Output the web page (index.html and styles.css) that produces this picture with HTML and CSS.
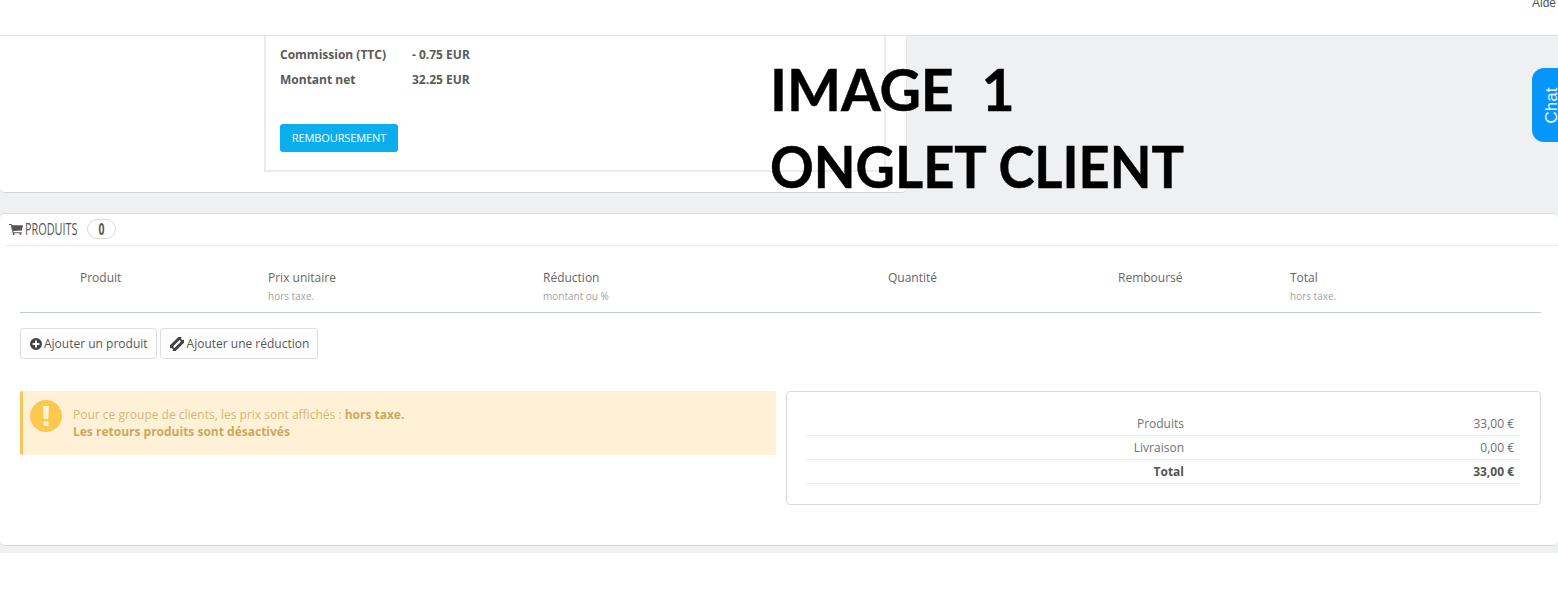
FILE: index.html
```html
<!DOCTYPE html>
<html lang="fr">
<head>
<meta charset="utf-8">
<title>Commande</title>
<link rel="stylesheet" href="styles.css">
</head>
<body>
<header class="topbar"><span class="help">Aide</span></header>
<main class="content">
  <section class="refund-panel">
    <div class="refund-box">
      <dl class="refund-row"><dt>Commission (TTC)</dt><dd>- 0.75 EUR</dd></dl>
      <dl class="refund-row"><dt>Montant net</dt><dd>32.25 EUR</dd></dl>
      <button class="btn-refund">REMBOURSEMENT</button>
    </div>
  </section>
  <section class="products-panel">
    <h2 class="panel-heading">
      <svg class="icon-cart" viewBox="0 0 14 11"><path d="M0 0h2.600l.4 1.200H14l-1.200 5.200-8.600.7.3 1.100h8.300v1H3.700L1.800 1H0z"/><circle cx="4.600" cy="10" r="1"/><circle cx="11.400" cy="10" r="1"/></svg>
      <span class="heading-text">PRODUITS</span>
      <span class="badge"><span>0</span></span>
    </h2>
    <div class="table-head">
      <div class="col col-product">Produit</div>
      <div class="col">Prix unitaire<small>hors taxe.</small></div>
      <div class="col">Réduction<small>montant ou %</small></div>
      <div class="col">Quantité</div>
      <div class="col">Remboursé</div>
      <div class="col">Total<small>hors taxe.</small></div>
    </div>
    <div class="actions">
      <button class="btn-default"><svg class="icon-btn" viewBox="0 0 12 12"><path fill-rule="evenodd" d="M6 0a6 6 0 1 1 0 12A6 6 0 0 1 6 0zM5 2.600v2.400H2.600v2H5v2.400h2V7h2.400V5H7V2.600z"/></svg>Ajouter un produit</button>
      <button class="btn-default"><svg class="icon-tags" viewBox="0 0 14 14"><g transform="rotate(-45 7 7)"><path fill-rule="evenodd" d="M-1 3h16v2.500a1.500 1.500 0 0 0 0 3V11H-1V8.500a1.500 1.500 0 0 0 0-3zM2.500 6v2h9V6z"/></g></svg>Ajouter une réduction</button>
    </div>
    <div class="summary">
      <div class="alert">
        <svg class="icon-alert" viewBox="0 0 32 32"><circle cx="16" cy="16" r="16" fill="#fcc94f"/><path d="M13 6h6l-.8 13h-4.400zM13.500 21.500h5v4.500h-5z" fill="#fef1d6"/></svg>
        <p>Pour ce groupe de clients, les prix sont affichés : <b>hors taxe.</b><br><b>Les retours produits sont désactivés</b></p>
      </div>
      <div class="totals">
        <div class="total-row"><span>Produits</span><span>33,00 €</span></div>
        <div class="total-row"><span>Livraison</span><span>0,00 €</span></div>
        <div class="total-row total-strong"><span>Total</span><span>33,00 €</span></div>
      </div>
    </div>
  </section>
</main>
<div class="page-end"></div>
<div class="overlay-title"><span class="line-one">IMAGE&nbsp; 1</span><span class="line-two">ONGLET CLIENT</span></div>
<div class="chat-tab"><span>Chat</span></div>
</body>
</html>
```
FILE: styles.css
```css
* { box-sizing: border-box; }
html, body { margin: 0; height: 600px; overflow: hidden; background: #fff; }
body { font-family: "Open Sans", "Liberation Sans", sans-serif; font-size: 12px; color: #555; }

.topbar { height: 36px; background: #fff; border-bottom: 1px solid #dfe2e4; display: flex; justify-content: flex-end; overflow: hidden; }
.help { font-family: "Liberation Sans", Arial, sans-serif; font-size: 12px; line-height: 14px; margin-top: -4px; color: #555; width: 26px; white-space: nowrap; }

.content { background: #eff0f2; height: 517px; padding-bottom: 7px; display: flex; flex-direction: column; gap: 20px; }

.refund-panel { width: 907px; height: 157px; flex: none; background: #fff; border-bottom: 1px solid #d3d6d8; border-right: 1px solid #e6e8ea; border-radius: 0 0 5px 5px; padding-left: 264px; padding-right: 20px; }
.refund-box { height: 136px; border: 2px solid #e8ecef; border-top: 0; padding: 6px 0 0 14px; }
.refund-row { display: flex; margin: 0; height: 25px; font-size: 12px; line-height: 25px; font-weight: 700; color: #5a5a5a; }
.refund-row dt { width: 132px; }
.refund-row dd { margin: 0; }
.btn-refund { display: block; margin-top: 32px; width: 118px; height: 28px; padding: 0; border: 0; border-radius: 3px; background: #0aaeef; color: #fff; font: 400 11px/28px "Open Sans", sans-serif; letter-spacing: -.1px; }

.products-panel { flex: 1; background: #fff; border-top: 1px solid #d9dcde; border-bottom: 1px solid #d3d6d8; border-radius: 5px; padding: 0 17px 0 20px; }
.panel-heading { margin: 0 -17px 0 -15px; height: 32px; border-bottom: 1px solid #eceef0; display: flex; align-items: center; padding-left: 4px; font-weight: 400; font-size: 14px; color: #555; }
.icon-cart { width: 14px; height: 11px; fill: #555; flex: none; }
.heading-text { display: inline-block; width: 52px; margin: -2px 0 0 2px; font-size: 16px; line-height: 18px; transform: scaleX(.68); transform-origin: left center; white-space: nowrap; }
.badge { margin: -1px 0 0 10px; width: 29px; height: 20px; border: 1px solid #d8dadc; border-radius: 10px; display: flex; align-items: center; justify-content: center; font-weight: 700; font-size: 16px; color: #555; }
.badge span { display: inline-block; transform: scaleX(.65); }

.table-head { display: grid; grid-template-columns: 248px 275px 345px 230px 172px 1fr; height: 67px; border-bottom: 1px solid #bbcdd2; padding-top: 23px; font-size: 12px; line-height: 18px; color: #666; }
.col-product { padding-left: 60px; }
.col small { display: block; font-size: 10px; line-height: 14px; margin-top: 2px; color: #a3a3a3; }

.actions { display: flex; gap: 3px; margin-top: 15px; }
.btn-default { display: flex; align-items: center; height: 31px; padding: 0 8px 0 9px; background: #fff; border: 1px solid #dbe0e2; border-radius: 3px; font: 400 12px "Open Sans", sans-serif; color: #555; white-space: nowrap; }
.icon-btn { width: 12px; height: 12px; fill: #444; margin-right: 2px; flex: none; }
.icon-tags { width: 14px; height: 14px; fill: #444; margin-right: 3px; flex: none; }

.summary { display: flex; gap: 10px; margin-top: 32px; align-items: flex-start; }
.alert { flex: none; width: 756px; height: 64px; display: flex; background: #fef1d6; border-left: 3px solid #f6c65c; border-radius: 3px 0 0 3px; padding: 9px 0 0 7px; color: #d3b778; }
.icon-alert { width: 32px; height: 32px; flex: none; }
.alert p { margin: 6px 0 0 11px; font-size: 12px; line-height: 17px; }
.alert b { color: #cba85f; }

.totals { flex: none; width: 755px; height: 114px; border: 1px solid #d8dcde; border-radius: 4px; padding: 20px 20px 0 20px; }
.total-row { display: flex; height: 24px; border-bottom: 1px solid #e7e9eb; line-height: 24px; font-size: 12px; color: #707070; padding-right: 6px; }
.total-row span:first-child { width: 377px; text-align: right; }
.total-row span:last-child { flex: 1; text-align: right; }
.total-strong { font-weight: 700; color: #555; }

.page-end { height: 47px; background: #fff; }

.overlay-title { position: absolute; left: 770px; top: 50px; font-family: Lato, "Open Sans", sans-serif; font-weight: 700; font-size: 58px; line-height: 77px; color: #000; white-space: nowrap; -webkit-text-stroke: .5px #000; }
.line-one, .line-two { display: block; transform-origin: left center; }
.line-one { transform: scaleX(.985); }
.line-two { transform: scaleX(.935); }

.chat-tab { position: absolute; left: 1532px; top: 68px; width: 26px; height: 74px; background: #0695fb; border-radius: 12px 0 0 12px; color: #eaf6ff; overflow: hidden; display: flex; align-items: center; justify-content: center; }
.chat-tab span { display: block; font-family: "Liberation Sans", sans-serif; font-size: 17px; line-height: 17px; transform: rotate(-90deg); margin-left: 14px; }
```
